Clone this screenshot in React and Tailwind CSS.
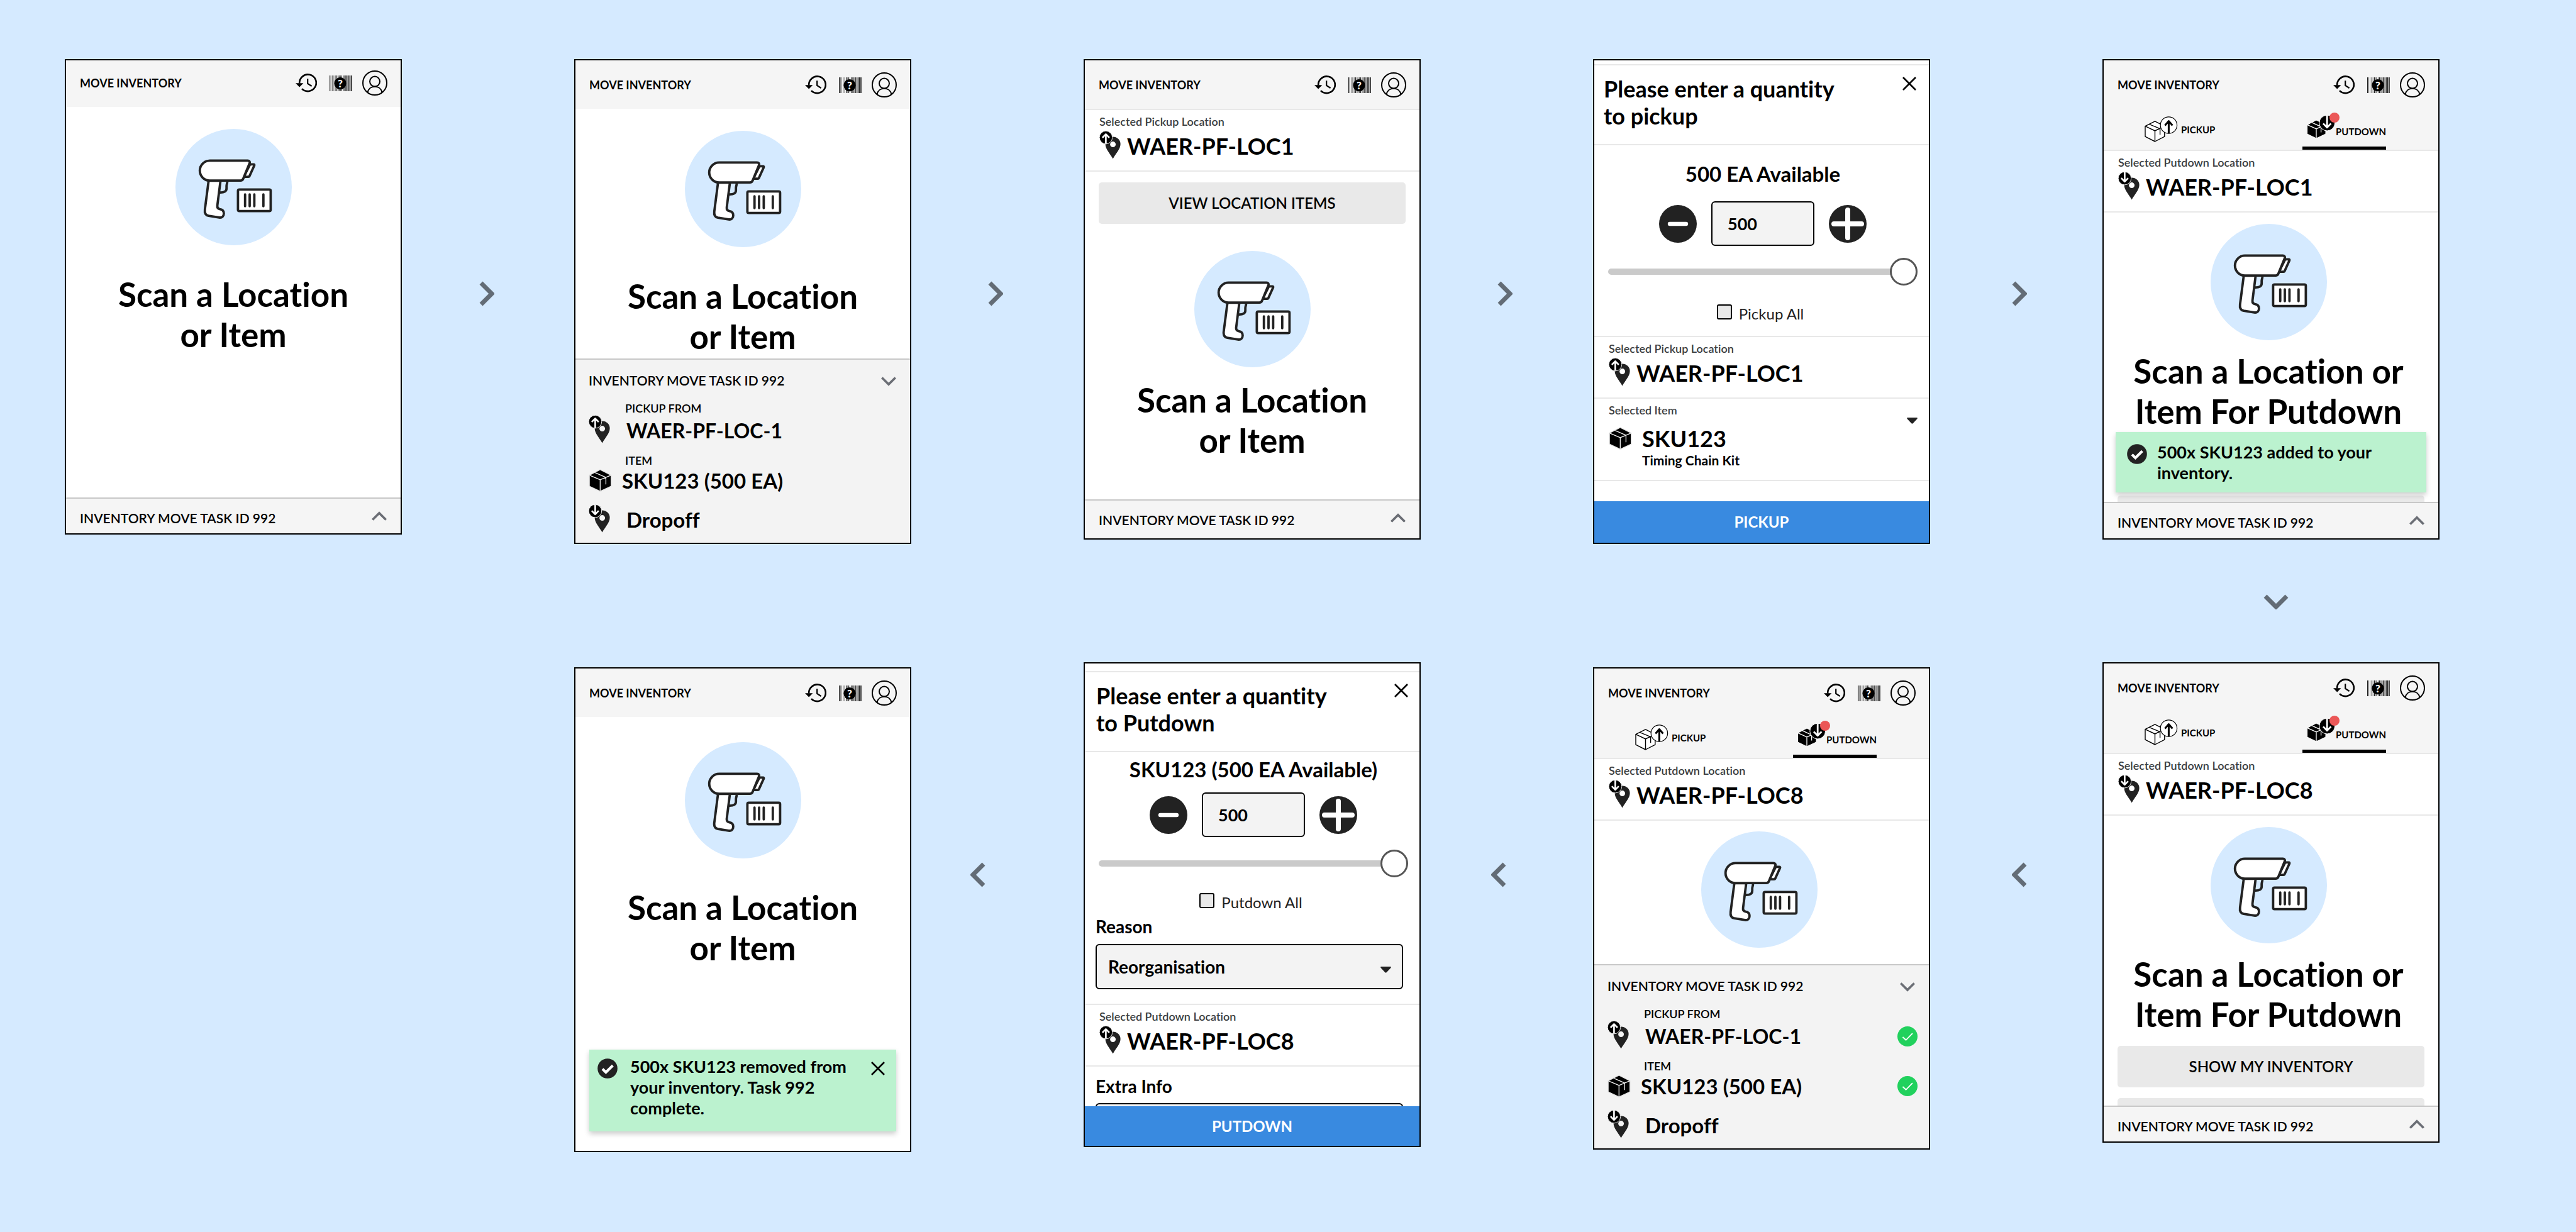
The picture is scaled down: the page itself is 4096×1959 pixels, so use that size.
import React from "react";

/* ---------- Icons ---------- */

function HistoryIcon() {
  return (
    <svg viewBox="0 0 34 30" className="h-[30px] w-[34px]" fill="none" aria-hidden="true">
      <path d="M6.2 15.6A13.3 13.3 0 1 1 10 24.1" stroke="#000" strokeWidth="2.6" />
      <path d="M0 15.3H12.4L6.2 21.4Z" fill="#000" />
      <path d="M19.2 8.2V15.8L25.6 20" stroke="#000" strokeWidth="2.2" />
    </svg>
  );
}

const bars = [
  [0, 1], [1.7, 0.8], [4, 0.6], [6.6, 0.6], [8.8, 0.7], [11, 1], [12.8, 0.6], [14.6, 1.2], [17.2, 0.7],
  [19, 1], [21.4, 1], [23.4, 0.9], [25.3, 1.5], [27.6, 0.8], [29.6, 1.2], [31.6, 1.7], [34.2, 1.6],
];

function BarcodeHelpIcon() {
  return (
    <svg viewBox="0 0 36 25" className="h-[25px] w-9" aria-hidden="true">
      {bars.map(([x, w]) => (
        <rect key={x} x={x} y="0" width={w} height="25" fill="#222" />
      ))}
      <circle cx="17" cy="12.6" r="9.6" fill="#000" />
      <text x="17" y="18.6" textAnchor="middle" fontFamily="Lato, sans-serif" fontWeight="900" fontSize="17" fill="#fff">
        ?
      </text>
    </svg>
  );
}

function PersonIcon() {
  return (
    <svg viewBox="0 0 40 40" className="size-10" fill="none" stroke="#000" strokeWidth="2" aria-hidden="true">
      <circle cx="20" cy="20" r="19" />
      <circle cx="20" cy="17.6" r="8" />
      <path d="M8.6 35C9.6 29.4 14 25.7 20 25.7S30.4 29.4 31.4 35" />
    </svg>
  );
}

function ScannerArt() {
  return (
    <svg
      viewBox="0 0 185 185"
      className="size-[185px]"
      fill="#fff"
      stroke="#222"
      strokeWidth="3.8"
      strokeLinejoin="round"
      strokeLinecap="round"
      aria-hidden="true"
    >
      <circle cx="92.5" cy="92.5" r="92.5" fill="#d5eaff" stroke="none" />
      <path d="M82.4 83.5C82.4 87 81.2 88 81.2 91V94.5C81.2 99 77.5 101.3 70.5 101" fill="none" />
      <path d="M52.7 82.4L46.8 128C46 134 48.4 137.4 52.6 138.2L69.5 140.9C74 141.5 76.9 139 76.9 134.4C76.9 130.6 74.8 128.2 70.8 127.6C67.6 127 66.2 125 66.6 121.6L71.6 82.4Z" />
      <path d="M118.6 56.4H124.2C125.4 56.4 125.8 57.2 125.3 58.2L117.6 75.2C117.3 75.9 116.8 76.2 116 76.2H108.6Z" />
      <path d="M54.6 50.4H114.8C117.6 50.4 118.8 52.4 117.8 54.8L107.8 79C106.9 81.2 105.8 82.2 103.4 82.2H54.6A15.9 15.9 0 0 1 54.6 50.4Z" />
      <rect x="99.4" y="96.4" width="52" height="34.3" rx="2.2" />
      <path d="M110.7 104.2V122.8M118 104.2V122.8M125.4 104.2V122.8M139.8 104.2V122.8" fill="none" />
    </svg>
  );
}

function PinIcon({ direction }) {
  return (
    <svg viewBox="0 0 34 50" className="h-[50px] w-[34px] shrink-0" fill="none" aria-hidden="true">
      <path
        fill="#222"
        fillRule="evenodd"
        d="M21.6 44.4C17.4 36.6 9.6 29 9.6 21.2A12 11.8 0 0 1 33.6 21.2C33.6 29 25.8 36.6 21.6 44.4ZM21.6 17.1A4.5 4.5 0 1 0 21.6 26.1A4.5 4.5 0 1 0 21.6 17.1Z"
      />
      <circle cx="10.4" cy="10.6" r="10.3" fill="#000" stroke="#fff" strokeWidth="0.9" />
      {direction === "up" ? (
        <path d="M10.4 20.6V5.4M4.9 11L10.4 5.4L15.9 11" stroke="#fff" strokeWidth="2.6" strokeLinejoin="round" />
      ) : (
        <path d="M10.4 0.6V15.8M4.9 10.2L10.4 15.8L15.9 10.2" stroke="#fff" strokeWidth="2.6" strokeLinejoin="round" />
      )}
    </svg>
  );
}

function BoxIcon() {
  return (
    <svg viewBox="0 0 37 36" className="h-9 w-[37px] shrink-0" strokeLinejoin="round" aria-hidden="true">
      <path d="M18.3 1.3L35.3 9.9V26.8L18.3 34.8L1.5 26.8V9.9Z" fill="#000" stroke="#e6e6e6" strokeWidth="2.4" />
      <path d="M18.3 1.6L35 9.9V26.8L18.3 34.6L1.8 26.8V9.9Z" fill="#000" />
      <path
        d="M1.8 9.9L18.3 16.8L35 9.9M18.3 16.8V34.6M10.4 5.6L27.4 13.2V24.2"
        fill="none"
        stroke="#f3f3f3"
        strokeWidth="1.3"
      />
    </svg>
  );
}

function PickupIcon() {
  return (
    <svg viewBox="-1 0 53 41" className="h-[41px] w-[53px]" fill="#fff" stroke="#000" strokeWidth="1.4" strokeLinejoin="round" aria-hidden="true">
      <path d="M15.5 7.9L30.8 15.6V32.2L15.5 40L0 32.2V15.6Z" />
      <path d="M0 15.6L15.5 23L30.8 15.6M15.5 23V40M6 12.4L23.6 19.6V29.2" fill="none" />
      <circle cx="37.4" cy="14" r="13.2" strokeWidth="1.2" />
      <path d="M37.4 27V8M31.4 14.4L37.4 7.6L43.4 14.4" fill="none" strokeWidth="3" />
    </svg>
  );
}

function PutdownIcon() {
  return (
    <svg viewBox="0 0 45 38" className="h-[38px] w-[45px]" strokeLinejoin="round" aria-hidden="true">
      <path d="M15 8L30 15.4V30L15 37L0.6 30V15.4Z" fill="#000" stroke="#fff" strokeWidth="1" />
      <path d="M0.6 15.4L15 21.8L30 15.4M15 21.8V37M7.6 11.6L22.6 18.6V27.6" fill="none" stroke="#fff" strokeWidth="1.3" />
      <circle cx="32.2" cy="12.6" r="12.4" fill="#000" stroke="#fff" strokeWidth="1" />
      <path d="M32.2 0.2V19.6M26 13.4L32.2 19.8L38.4 13.4" fill="none" stroke="#fff" strokeWidth="2.8" />
    </svg>
  );
}

function CloseIcon() {
  return (
    <svg viewBox="0 0 22 22" className="size-[22px]" stroke="#000" strokeWidth="2.6" aria-hidden="true">
      <path d="M1 1L21 21M21 1L1 21" />
    </svg>
  );
}

function SmallChevron({ up }) {
  return (
    <svg viewBox="0 0 24 15" className="h-[15px] w-6" fill="none" stroke="#6b6e75" strokeWidth="3.6" aria-hidden="true">
      <path d={up ? "M1.3 13.6L12 2.9L22.7 13.6" : "M1.3 1.4L12 12.1L22.7 1.4"} />
    </svg>
  );
}

function CaretIcon() {
  return (
    <svg viewBox="0 0 17 10" className="h-[10px] w-[17px]" aria-hidden="true">
      <path d="M1.4 0H15.6C16.8 0 17.2 1 16.4 1.9L9.9 9C9 9.9 8 9.9 7.1 9L0.6 1.9C-0.2 1 0.2 0 1.4 0Z" fill="#222" />
    </svg>
  );
}

function ToastCheck() {
  return (
    <svg viewBox="0 0 32 32" className="size-8" aria-hidden="true">
      <circle cx="16" cy="16" r="15.8" fill="#222" />
      <path d="M8 16.8L13.4 22L24.4 11.2" fill="none" stroke="#fff" strokeWidth="4.2" />
    </svg>
  );
}

function DoneCheck() {
  return (
    <svg viewBox="0 0 32 32" className="size-8" role="img" aria-label="Done">
      <circle cx="16" cy="16" r="16" fill="#21d15d" />
      <path d="M8.4 17L13.6 21.8L24 11.2" fill="none" stroke="#fff" strokeWidth="1.9" />
    </svg>
  );
}

function FlowArrow({ dir }) {
  const d = { right: "M3 3L20 20L3 37", left: "M21 3L4 20L21 37", down: "M3 3L20 20L37 3" }[dir];
  return (
    <svg
      viewBox={dir === "down" ? "0 0 40 24" : "0 0 24 40"}
      className={dir === "down" ? "h-6 w-10" : "h-10 w-6"}
      fill="none"
      stroke="#636c76"
      strokeWidth="7"
      aria-hidden="true"
    >
      <path d={d} />
    </svg>
  );
}

/* ---------- Shared parts ---------- */

function Frame({ label, className = "", children }) {
  return (
    <section aria-label={label} className={`flex flex-col border-2 border-black bg-white ${className}`}>
      {children}
    </section>
  );
}

function Header({ className = "h-[77px]" }) {
  return (
    <header className={`flex items-center border-t border-white bg-[#f5f5f5] pr-[21px] pl-[22px] ${className}`}>
      <h1 className="mr-auto text-[18px] leading-6 font-bold">MOVE INVENTORY</h1>
      <button type="button" aria-label="History" className="mr-5">
        <HistoryIcon />
      </button>
      <button type="button" aria-label="Barcode help" className="mr-4">
        <BarcodeHelpIcon />
      </button>
      <button type="button" aria-label="Account">
        <PersonIcon />
      </button>
    </header>
  );
}

function Tabs() {
  return (
    <div role="tablist" className="flex h-[67px] justify-between border-b-2 border-[#e8e8e8] bg-[#f5f5f5] pr-[83px] pl-[65px]">
      <button type="button" role="tab" aria-selected="false" className="flex items-center gap-[5px] text-[15px] leading-6 font-bold">
        <PickupIcon />
        PICKUP
      </button>
      <button
        type="button"
        role="tab"
        aria-selected="true"
        className="flex items-end gap-px border-b-[5px] border-black pb-3 pl-[7px] text-[15px] leading-6 font-bold"
      >
        <span className="relative">
          <PutdownIcon />
          <span className="absolute -top-1 left-9 size-4 rounded-full bg-[#eb5757]" />
        </span>
        PUTDOWN
      </button>
    </div>
  );
}

function Location({ label, value, direction }) {
  return (
    <div className="border-b-2 border-[#e8e8e8] pt-[6px] pb-[10px] pl-[23px]">
      <p className="text-[18px] leading-6 font-semibold text-[#3a3d40]">{label}</p>
      <div className="flex h-14 items-center gap-[10px]">
        <PinIcon direction={direction} />
        <p className="pb-[3px] text-[36px] leading-[44px] font-bold">{value}</p>
      </div>
    </div>
  );
}

function Hero({ children, gap = "gap-[46px]", className = "" }) {
  return (
    <div className={`flex flex-col items-center ${gap} ${className}`}>
      <ScannerArt />
      {children && <h2 className="text-center text-[53px] leading-[64px] font-bold">{children}</h2>}
    </div>
  );
}

function TaskFooter({ className = "h-[57px]" }) {
  return (
    <footer className={`flex items-start justify-between border-t-2 border-[#c8c8c8] bg-[#f5f5f5] pt-5 pr-[18px] pl-[22px] ${className}`}>
      <h3 className="text-[21px] leading-[22px] font-semibold">INVENTORY MOVE TASK ID 992</h3>
      <button type="button" aria-label="Show task" className="flex w-8 justify-center">
        <SmallChevron up />
      </button>
    </footer>
  );
}

function TaskPanel({ done }) {
  return (
    <div className="border-t-2 border-[#c8c8c8] bg-[#f3f3f3] pt-[22px] pr-[18px] pb-[11px] pl-[21px]">
      <div className="flex h-6 items-start justify-between">
        <h3 className="text-[21px] leading-[22px] font-semibold">INVENTORY MOVE TASK ID 992</h3>
        <button type="button" aria-label="Hide task" className="flex h-6 w-8 items-center justify-center">
          <SmallChevron />
        </button>
      </div>
      <p className="mt-5 pl-[58px] text-[18px] leading-[22px] font-semibold">PICKUP FROM</p>
      <div className="flex h-[50px] items-center">
        <PinIcon direction="up" />
        <p className="mr-auto pl-[26px] text-[32px] leading-10 font-bold">WAER-PF-LOC-1</p>
        {done && <DoneCheck />}
      </div>
      <p className="mt-[11px] pl-[58px] text-[18px] leading-[22px] font-semibold">ITEM</p>
      <div className="flex h-[42px] items-center">
        <BoxIcon />
        <p className="mr-auto pl-4 text-[33px] leading-10 font-bold">SKU123 (500 EA)</p>
        {done && <DoneCheck />}
      </div>
      <div className="mt-[17px] flex h-[50px] items-center">
        <PinIcon direction="down" />
        <p className="pb-0.5 pl-[26px] text-[33px] leading-10 font-bold">Dropoff</p>
      </div>
    </div>
  );
}

function GreyButton({ children, className = "" }) {
  return (
    <button type="button" className={`mx-[22px] h-[66px] rounded-[5px] bg-[#e9e9e9] text-[24px] leading-8 font-semibold ${className}`}>
      {children}
    </button>
  );
}

function ButtonPeek({ className, label }) {
  return (
    <div className={`flex flex-col overflow-hidden ${className}`}>
      <button type="button" aria-label={label} className="mx-[22px] h-[66px] shrink-0 rounded-[5px] bg-[#e9e9e9]" />
    </div>
  );
}

function DialogTitle({ children, className }) {
  return (
    <div className={`flex items-start justify-between border-y-2 border-[#e8e8e8] pt-4 pb-[23px] ${className}`}>
      <h2 className="text-[36px] leading-[43px] font-bold">{children}</h2>
      <button type="button" aria-label="Close" className="flex h-[26px] w-7 items-center justify-center">
        <CloseIcon />
      </button>
    </div>
  );
}

function Stepper({ id }) {
  return (
    <div className="flex items-center justify-center gap-[23px]">
      <button type="button" aria-label="Decrease quantity">
        <svg viewBox="0 0 60 60" className="size-[60px]" aria-hidden="true">
          <circle cx="30" cy="30" r="30" fill="#222" />
          <path d="M17 30H43" stroke="#fff" strokeWidth="6.4" strokeLinecap="round" />
        </svg>
      </button>
      <input
        id={id}
        type="text"
        inputMode="numeric"
        aria-label="Quantity"
        defaultValue="500"
        className="h-[71px] w-[164px] rounded-[6px] border-2 border-black bg-[#f3f3f3] pl-[24px] text-[27px] font-bold"
      />
      <button type="button" aria-label="Increase quantity">
        <svg viewBox="0 0 60 60" className="size-[60px]" aria-hidden="true">
          <circle cx="30" cy="30" r="30" fill="#222" />
          <path d="M8 30H52M30 8V52" stroke="#fff" strokeWidth="8" strokeLinecap="round" />
        </svg>
      </button>
    </div>
  );
}

function QuantitySlider() {
  return (
    <input
      type="range"
      min="0"
      max="500"
      defaultValue="500"
      aria-label="Quantity slider"
      className="block h-[45px] w-full appearance-none bg-transparent [&::-webkit-slider-runnable-track]:h-[10px] [&::-webkit-slider-runnable-track]:rounded-full [&::-webkit-slider-runnable-track]:bg-[#cacaca] [&::-webkit-slider-thumb]:-mt-[17px] [&::-webkit-slider-thumb]:box-border [&::-webkit-slider-thumb]:size-[44px] [&::-webkit-slider-thumb]:appearance-none [&::-webkit-slider-thumb]:rounded-full [&::-webkit-slider-thumb]:border-[3px] [&::-webkit-slider-thumb]:border-solid [&::-webkit-slider-thumb]:border-[#555] [&::-webkit-slider-thumb]:bg-white"
    />
  );
}

function AllCheckbox({ children, className }) {
  return (
    <label className={`flex items-start justify-center gap-[11px] pr-2 text-[24px] leading-[30px] text-[#222] ${className}`}>
      <input type="checkbox" className="size-6 appearance-none rounded-[3px] border-2 border-black bg-[#e9e9e9]" />
      {children}
    </label>
  );
}

function PrimaryButton({ children, className }) {
  return (
    <button type="button" className={`bg-[#398ae0] text-[24px] leading-8 font-bold text-white ${className}`}>
      {children}
    </button>
  );
}

function Step({ dir, className = "" }) {
  return (
    <div className={`flex justify-center ${className}`}>
      <FlowArrow dir={dir} />
    </div>
  );
}

/* ---------- Page ---------- */

export default function App() {
  return (
    <main className="min-h-screen bg-[#d5eaff] pt-[94px] pr-[217px] pb-[127px] pl-[103px] font-[Lato,'Liberation_Sans',sans-serif] text-black [font-variant-ligatures:none]">
      <div className="grid grid-cols-[536fr_274fr_536fr_274fr_536fr_274fr_536fr_274fr_536fr] items-start">
        {/* Start: scan prompt */}
        <Frame label="Scan a location or item">
          <Header className="h-[74px] pb-[3px]" />
          <Hero className="pt-[35px] pb-[227px]">
            Scan a Location
            <br />
            or Item
          </Hero>
          <TaskFooter />
        </Frame>
        <Step dir="right" className="pt-[353px] pr-1" />

        {/* Task details open */}
        <Frame label="Task details">
          <Header />
          <Hero className="pt-[35px] pb-[3px]">
            Scan a Location
            <br />
            or Item
          </Hero>
          <TaskPanel />
        </Frame>
        <Step dir="right" className="pt-[353px] pr-[6px]" />

        {/* Pickup location chosen */}
        <Frame label="Pickup location selected">
          <Header />
          <div className="border-t-2 border-[#e8e8e8]">
            <Location label="Selected Pickup Location" value="WAER-PF-LOC1" direction="up" />
          </div>
          <GreyButton className="mt-[17px]">VIEW LOCATION ITEMS</GreyButton>
          <Hero gap="gap-5" className="pt-[43px] pb-[62px]">
            Scan a Location
            <br />
            or Item
          </Hero>
          <TaskFooter className="h-[62px]" />
        </Frame>
        <Step dir="right" className="pt-[353px] pr-[6px]" />

        {/* Pickup quantity */}
        <Frame label="Pickup quantity" className="pt-[6px]">
          <DialogTitle className="pr-[17px] pl-[15px]">
            Please enter a quantity
            <br />
            to pickup
          </DialogTitle>
          <div className="border-b-2 border-[#e8e8e8] pt-[26px] pr-[18px] pb-5 pl-[22px]">
            <p className="mb-[25px] text-center text-[33px] leading-[38px] font-bold">500 EA Available</p>
            <Stepper id="pickup-quantity" />
            <div className="pt-[18px] pb-px">
              <QuantitySlider />
            </div>
            <AllCheckbox className="mt-[29px]">Pickup All</AllCheckbox>
          </div>
          <Location label="Selected Pickup Location" value="WAER-PF-LOC1" direction="up" />
          <div className="flex items-start justify-between border-b-2 border-[#e8e8e8] pt-[6px] pr-[18px] pb-[18px] pl-[23px]">
            <div>
              <p className="text-[18px] leading-6 font-semibold text-[#3a3d40]">Selected Item</p>
              <div className="mt-[11px] flex items-start gap-4">
                <div className="flex h-11 items-center">
                  <BoxIcon />
                </div>
                <div>
                  <p className="text-[36px] leading-[44px] font-bold">SKU123</p>
                  <p className="text-[21px] leading-[26px] font-bold">Timing Chain Kit</p>
                </div>
              </div>
            </div>
            <button type="button" aria-label="Choose item" className="pt-6">
              <CaretIcon />
            </button>
          </div>
          <PrimaryButton className="mt-8 h-[66px]">PICKUP</PrimaryButton>
        </Frame>
        <Step dir="right" className="pt-[353px] pl-[10px]" />

        {/* Added to inventory */}
        <Frame label="Added to inventory">
          <Header />
          <Tabs />
          <Location label="Selected Putdown Location" value="WAER-PF-LOC1" direction="down" />
          <Hero gap="gap-[17px]" className="pt-[18px] pr-2 pb-px">
            Scan a Location or
            <br />
            Item For Putdown
          </Hero>
          <div
            role="status"
            className="z-10 mx-[19px] flex items-start gap-4 bg-[#bbf2cf] px-[18px] pt-[15px] pb-[15px] shadow-[0_4px_8px_rgba(0,0,0,0.2)]"
          >
            <span className="pt-1">
              <ToastCheck />
            </span>
            <p className="flex-1 text-[27px] leading-[33px] font-bold">500x SKU123 added to your inventory.</p>
          </div>
          <ButtonPeek label="Show my inventory" className="mt-[5px] h-[10px]" />
          <TaskFooter className="h-[58px]" />
        </Frame>

        <div className="col-span-8" />
        <div className="flex h-[188px] items-center justify-center pb-1 pl-4">
          <FlowArrow dir="down" />
        </div>

        {/* Finished */}
        <div className="col-span-2" />
        <Frame label="Move complete" className="mt-2">
          <Header />
          <Hero className="pt-10 pb-[130px]">
            Scan a Location
            <br />
            or Item
          </Hero>
          <div
            role="status"
            className="mx-[22px] mb-[31px] flex items-start bg-[#bbf2cf] pt-[10px] pr-[15px] pb-[21px] pl-[13px] shadow-[0_4px_8px_rgba(0,0,0,0.2)]"
          >
            <span className="pt-1">
              <ToastCheck />
            </span>
            <p className="flex-1 pr-4 pl-5 text-[27px] leading-[33px] font-bold">
              500x SKU123 removed from your inventory. Task 992 complete.
            </p>
            <button type="button" aria-label="Dismiss" className="flex h-[40px] w-7 items-center justify-center">
              <CloseIcon />
            </button>
          </div>
        </Frame>
        <Step dir="left" className="pt-[318px] pr-[62px]" />

        {/* Putdown quantity */}
        <Frame label="Putdown quantity" className="pt-3">
          <DialogTitle className="pr-[15px] pl-[18px]">
            Please enter a quantity
            <br />
            to Putdown
          </DialogTitle>
          <div className="pt-2 pr-[18px] pl-[22px]">
            <p className="mb-[18px] text-center text-[33px] leading-[38px] font-bold">SKU123 (500 EA Available)</p>
            <Stepper id="putdown-quantity" />
            <div className="pt-[19px]">
              <QuantitySlider />
            </div>
            <AllCheckbox className="mt-[25px]">Putdown All</AllCheckbox>
          </div>
          <div className="border-b-2 border-[#e8e8e8] pt-[6px] pr-[26px] pb-[23px] pl-[17px]">
            <label htmlFor="reason" className="block text-[28px] leading-[34px] font-bold">
              Reason
            </label>
            <div className="relative mt-[11px]">
              <select
                id="reason"
                defaultValue="Reorganisation"
                className="block h-[72px] w-full appearance-none rounded-[6px] border-2 border-black bg-[#f3f3f3] pl-[18px] text-[28px] font-bold"
              >
                <option>Reorganisation</option>
              </select>
              <span className="pointer-events-none absolute inset-y-0 right-[19px] flex items-center pt-[10px]">
                <CaretIcon />
              </span>
            </div>
          </div>
          <Location label="Selected Putdown Location" value="WAER-PF-LOC8" direction="up" />
          <div className="pt-[14px] pr-[26px] pl-[17px]">
            <label htmlFor="extra" className="block text-[28px] leading-[34px] font-bold">
              Extra Info
            </label>
            <div className="mt-[10px] h-[5px] overflow-hidden">
              <input id="extra" type="text" className="block h-[72px] w-full rounded-[6px] border-2 border-black bg-[#f3f3f3]" />
            </div>
          </div>
          <PrimaryButton className="h-[63px]">PUTDOWN</PrimaryButton>
        </Frame>
        <Step dir="left" className="pt-[318px] pr-[26px]" />

        {/* Putdown task details */}
        <Frame label="Putdown task details" className="mt-2">
          <Header />
          <Tabs />
          <Location label="Selected Putdown Location" value="WAER-PF-LOC8" direction="down" />
          <Hero className="pt-[17px] pr-2 pb-[26px]" />
          <TaskPanel done />
        </Frame>
        <Step dir="left" className="pt-[318px] pl-[10px]" />

        {/* Putdown location chosen */}
        <Frame label="Putdown location selected">
          <Header />
          <Tabs />
          <Location label="Selected Putdown Location" value="WAER-PF-LOC8" direction="down" />
          <Hero gap="gap-[17px]" className="pt-[18px] pr-2">
            Scan a Location or
            <br />
            Item For Putdown
          </Hero>
          <GreyButton className="mt-[18px]">SHOW MY INVENTORY</GreyButton>
          <ButtonPeek label="More actions" className="mt-[17px] h-3" />
          <TaskFooter />
        </Frame>
      </div>
    </main>
  );
}
